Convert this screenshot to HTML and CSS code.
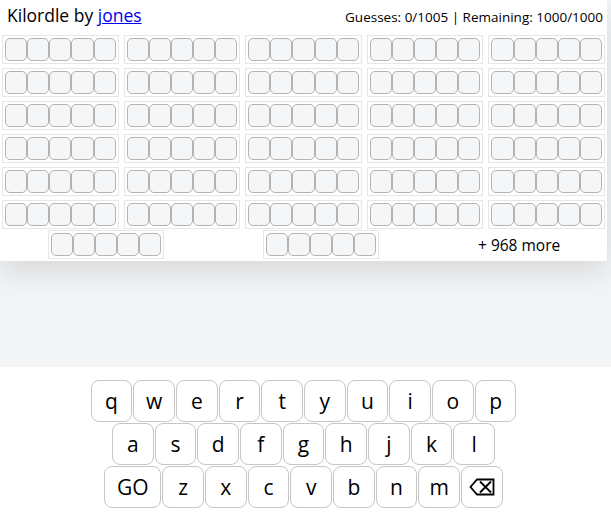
FILE: index.html
```html
<!DOCTYPE html>
<html lang="en">
<head>
  <meta charset="UTF-8">
  <title>Kilordle</title>
  <link rel="stylesheet" href="styles.css">
</head>
<body>

  <div class="card">
    <div class="header">
      <div class="title">Kilordle by <a href="#">jones</a></div>
      <div class="stats">Guesses: 0/1005 | Remaining: 1000/1000</div>
    </div>

    <div class="boards" id="boards"></div>

    <div class="lastRow">
      <div class="board"><span class="tile"></span><span class="tile"></span><span class="tile"></span><span class="tile"></span><span class="tile"></span></div>
      <div class="board"><span class="tile"></span><span class="tile"></span><span class="tile"></span><span class="tile"></span><span class="tile"></span></div>
      <div class="more">+ 968 more</div>
    </div>
  </div>

  <div class="keyboard">
    <div class="keyRow">
      <button class="key">q</button><button class="key">w</button><button class="key">e</button><button class="key">r</button><button class="key">t</button><button class="key">y</button><button class="key">u</button><button class="key">i</button><button class="key">o</button><button class="key">p</button>
    </div>
    <div class="keyRow">
      <button class="key">a</button><button class="key">s</button><button class="key">d</button><button class="key">f</button><button class="key">g</button><button class="key">h</button><button class="key">j</button><button class="key">k</button><button class="key">l</button>
    </div>
    <div class="keyRow">
      <button class="key wide">GO</button><button class="key">z</button><button class="key">x</button><button class="key">c</button><button class="key">v</button><button class="key">b</button><button class="key">n</button><button class="key">m</button>
      <button class="key">
        <svg width="26" height="18" viewBox="0 0 26 18">
          <path d="M8 1.5 H24.5 V16.5 H8 L1.5 9 Z" fill="none" stroke="#000" stroke-width="1.8" stroke-linejoin="miter"/>
          <path d="M11 3.5 L22 14.5 M22 3.5 L11 14.5" stroke="#000" stroke-width="1.8"/>
        </svg>
      </button>
    </div>
  </div>

  <script>
    // 30 visible boards, five empty tiles each
    const boards = document.getElementById("boards");
    for (let i = 0; i < 30; i++) {
      const board = document.createElement("div");
      board.className = "board";
      for (let j = 0; j < 5; j++) {
        const tile = document.createElement("span");
        tile.className = "tile";
        board.appendChild(tile);
      }
      boards.appendChild(board);
    }
  </script>

</body>
</html>
```

FILE: styles.css
```css
html, body {
  height: 100%;
}

body {
  margin: 0;
  background: #f3f4f5;
  font-family: 'Open Sans', sans-serif;
  color: #000;
  display: flex;
  flex-direction: column;
}

.card {
  background: #fff;
  margin-right: 4px;
  padding: 0 2px 2px 2px;
  box-shadow: 0 10px 30px rgba(0,0,0,0.12);
}

.header {
  display: flex;
  justify-content: space-between;
  align-items: baseline;
  height: 35px;
  padding: 0 2px 0 5px;
}

.title {
  font-size: 17.5px;
  line-height: 30px;
}

.title a {
  color: #0000ee;
}

.stats {
  font-size: 13.5px;
}

.boards {
  display: grid;
  grid-template-columns: repeat(5, 1fr);
  column-gap: 5px;
  row-gap: 4px;
}

.board {
  display: flex;
  border: 1px solid #e6e6e6;
  padding: 2px;
}

.tile {
  flex: 1;
  height: 23px;
  box-sizing: border-box;
  border: 1px solid #b3b3b3;
  border-radius: 5px;
  background: #f5f6f8;
}

/* leftover boards plus the count of hidden ones */
.lastRow {
  display: flex;
  align-items: center;
  gap: 99px;
  padding-left: 46px;
  margin-top: 1px;
}

.lastRow .board {
  width: 110px;
}

.more {
  font-size: 15.5px;
}

.keyboard {
  margin-top: auto;
  background: #fff;
  padding: 13px 4px 4px 0;
  display: flex;
  flex-direction: column;
  align-items: center;
  gap: 1px;
}

.keyRow {
  display: flex;
  gap: 1px;
}

.key {
  width: 41.7px;
  height: 42px;
  padding: 0;
  border: 1px solid #c6c6c6;
  border-radius: 8px;
  background: #fff;
  font-family: 'Open Sans', sans-serif;
  font-size: 21px;
  color: #000;
  display: flex;
  align-items: center;
  justify-content: center;
}

.key.wide {
  width: 57px;
}
```
